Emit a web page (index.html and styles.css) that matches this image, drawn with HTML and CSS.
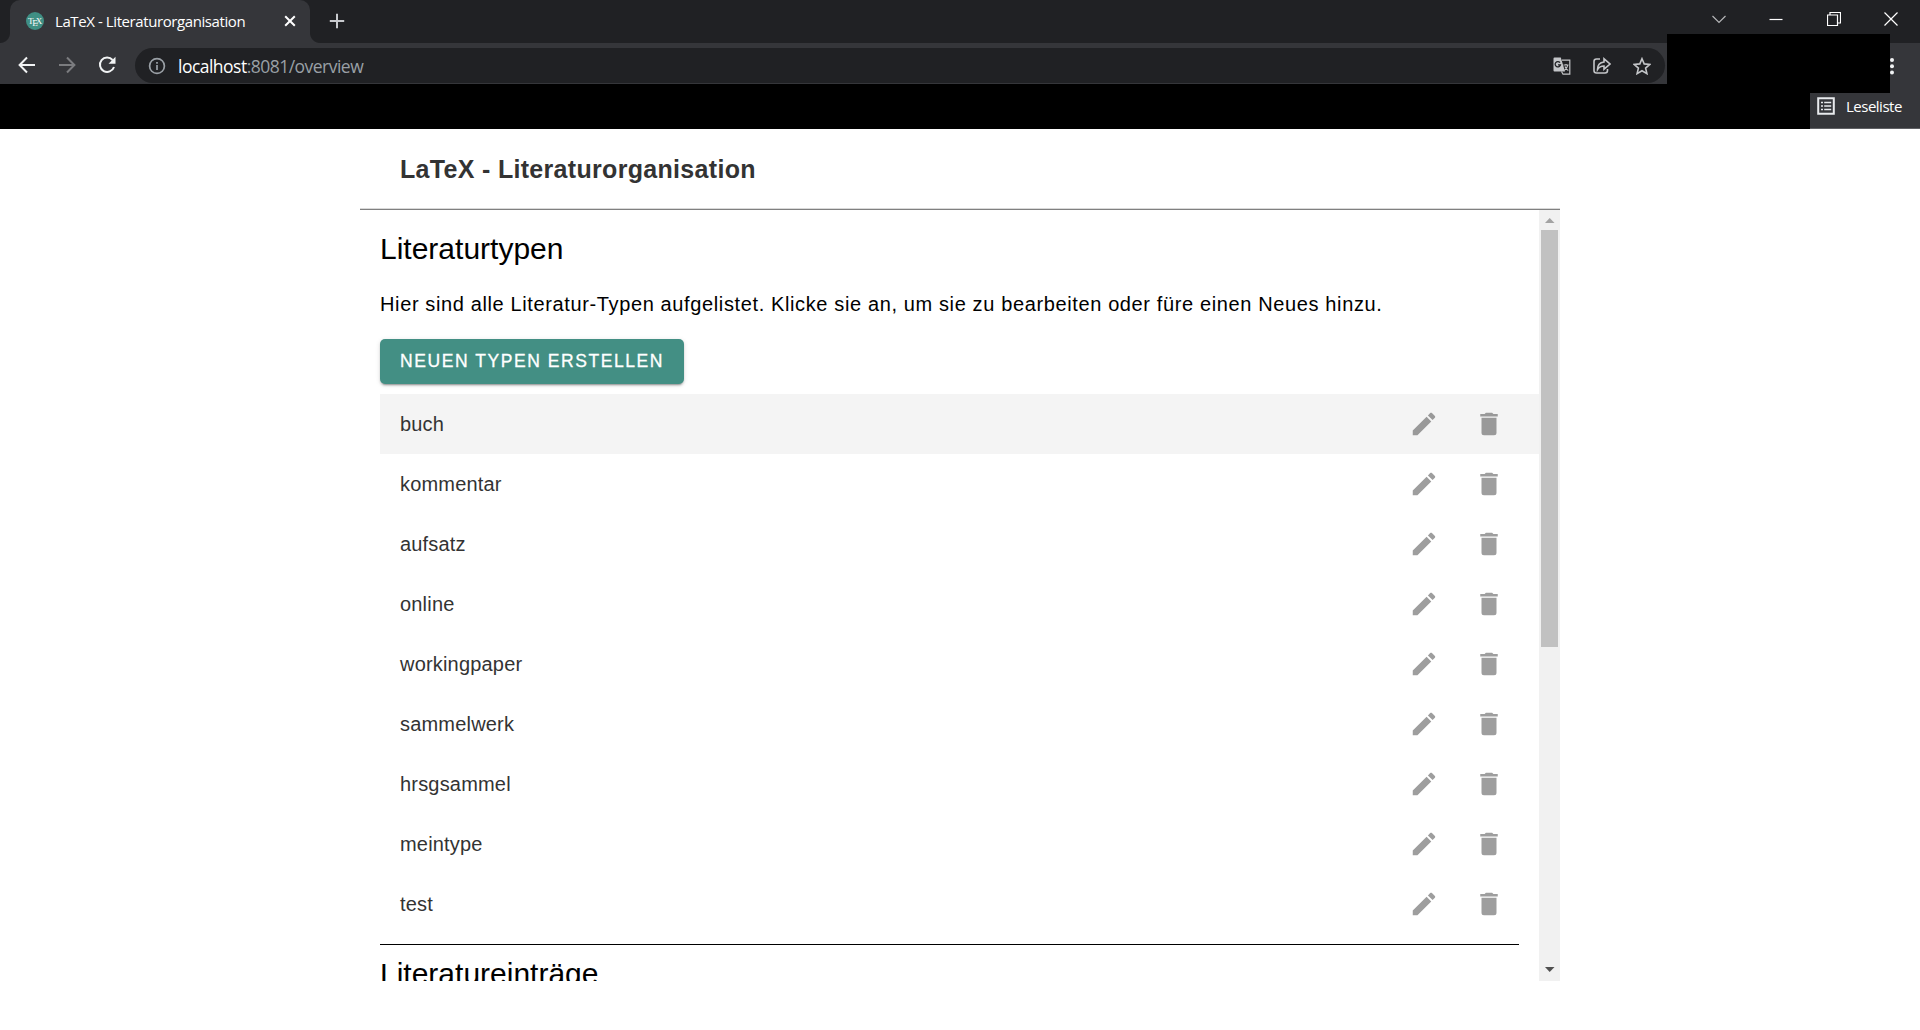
FILE: index.html
```html
<!DOCTYPE html>
<html lang="de">
<head>
<meta charset="utf-8">
<title>LaTeX - Literaturorganisation</title>
<link rel="stylesheet" href="styles.css">
</head>
<body>
<svg class="defs" width="0" height="0">
  <symbol id="pencil" viewBox="0 0 24 24"><path d="M20.71 7.04c.39-.39.39-1.04 0-1.41l-2.34-2.34c-.37-.39-1.02-.39-1.41 0l-1.84 1.83 3.75 3.75M3 17.25V21h3.75L17.81 9.93l-3.75-3.75L3 17.25z"/></symbol>
  <symbol id="trash" viewBox="0 0 24 24"><path d="M19 4h-3.5l-1-1h-5l-1 1H5v2h14M6 19a2 2 0 0 0 2 2h8a2 2 0 0 0 2-2V7H6v12z"/></symbol>
</svg>
<header class="browser">
  <div class="tabstrip">
    <div class="tab">
      <svg class="favicon" viewBox="0 0 18 18"><circle cx="9" cy="9" r="9" fill="#3f8f84"/><text x="2" y="11.600" class="logo-t">T</text><text x="6.200" y="14" class="logo-t">E</text><text x="9.800" y="11.600" class="logo-t">X</text></svg>
      <span class="tab-title">LaTeX - Literaturorganisation</span>
      <svg class="tab-close" viewBox="0 0 12 12"><path d="M1.2 1.2l9.6 9.6M10.8 1.2L1.2 10.8" stroke="#fff" stroke-width="2"/></svg>
    </div>
    <svg class="new-tab" viewBox="0 0 16 16"><path d="M8 .8v14.4M.8 8h14.4" stroke="#c8cace" stroke-width="2"/></svg>
    <div class="window-buttons">
      <svg viewBox="0 0 14 14"><path d="M.5 4L7 10.500 13.500 4"/></svg>
      <svg viewBox="0 0 14 14"><path d="M.5 7.500h13" class="bright"/></svg>
      <svg viewBox="0 0 14 14"><path d="M.5 3h10v10.500H.5zM3 3V.5h10.500v10.500h-3" class="bright"/></svg>
      <svg viewBox="0 0 14 14"><path d="M.5.5l13 13M13.500.5l-13 13" class="bright"/></svg>
    </div>
  </div>
  <div class="toolbar">
    <svg class="nav" viewBox="0 0 18 18"><path d="M17 9H2M9 1.500L1.600 9 9 16.500" /></svg>
    <svg class="nav dim" viewBox="0 0 18 18"><path d="M1 9h15M9 1.500L16.400 9 9 16.500"/></svg>
    <svg class="nav" viewBox="0 0 18 18"><path d="M14.600 4A7.200 7.200 0 1 0 16 11"/><path d="M17.500.8v7h-7z" class="solid"/></svg>
    <div class="omnibox">
      <svg class="info" viewBox="0 0 18 18"><circle cx="9" cy="9" r="7.400"/><path d="M9 8v5M9 5v1.800"/></svg>
      <span class="url">localhost<span class="path">:8081/overview</span></span>
      <div class="omni-actions">
        <svg viewBox="0 0 18 18"><path d="M9 3.200h7.800v14H10L8.500 14.500" class="line thin"/><path d="M1.500.5h6.300L12 14.500H1.500a1 1 0 0 1-1-1v-12a1 1 0 0 1 1-1z"/><path d="M7 5.600A2.700 2.700 0 1 0 7.500 7.800H5" class="cut"/><path d="M10.500 8h5M13 7v1M14.800 8c-.5 2.500-2 4.500-3.500 5.500M12 9.500c.7 1.700 2 3.400 3.300 4" class="line thin"/></svg>
        <svg viewBox="0 0 18 18"><path d="M7 2H3.500Q1 2 1 4.500v9Q1 16 3.500 16h8.500q2.500 0 2.500-2.500V12" class="line"/><path d="M4.500 12.500C4.500 8 7 5.500 11 5V1.800L17 7l-6 5.200V9C8 9 6 10 4.500 12.500z" class="line"/></svg>
        <svg viewBox="0 0 18 18"><path d="M9 1.700l2.200 5.200 5.700.5-4.300 3.700 1.300 5.500L9 13.700l-4.900 2.900 1.300-5.500L1.100 7.400l5.700-.5z" class="line star"/></svg>
      </div>
    </div>
    <svg class="menu" viewBox="0 0 6 18"><circle cx="3" cy="3" r="2"/><circle cx="3" cy="9.300" r="2"/><circle cx="3" cy="15.600" r="2"/></svg>
    <div class="extension-cover"></div>
  </div>
  <div class="bookmarks">
    <div class="reading-list">
      <svg viewBox="0 0 18 18"><path d="M1.200 1.200h15.600v15.600H1.200z" fill="none" stroke="#e8eaed" stroke-width="2"/><path d="M4 5.500h2M7.200 5.500h7M4 9h2M7.200 9h7M4 12.500h2M7.200 12.500h7" stroke="#e8eaed" stroke-width="1.700"/></svg>
      <span>Leseliste</span>
    </div>
  </div>
</header>
<main class="app">
  <h1 class="app-title">LaTeX - Literaturorganisation</h1>
  <div class="scroller">
    <section class="content">
      <h2>Literaturtypen</h2>
      <p>Hier sind alle Literatur-Typen aufgelistet. Klicke sie an, um sie zu bearbeiten oder füre einen Neues hinzu.</p>
      <button class="create">Neuen Typen erstellen</button>
      <ul class="types">
        <li class="active"><span>buch</span><svg><use href="#pencil"/></svg><svg><use href="#trash"/></svg></li>
        <li><span>kommentar</span><svg><use href="#pencil"/></svg><svg><use href="#trash"/></svg></li>
        <li><span>aufsatz</span><svg><use href="#pencil"/></svg><svg><use href="#trash"/></svg></li>
        <li><span>online</span><svg><use href="#pencil"/></svg><svg><use href="#trash"/></svg></li>
        <li><span>workingpaper</span><svg><use href="#pencil"/></svg><svg><use href="#trash"/></svg></li>
        <li><span>sammelwerk</span><svg><use href="#pencil"/></svg><svg><use href="#trash"/></svg></li>
        <li><span>hrsgsammel</span><svg><use href="#pencil"/></svg><svg><use href="#trash"/></svg></li>
        <li><span>meintype</span><svg><use href="#pencil"/></svg><svg><use href="#trash"/></svg></li>
        <li><span>test</span><svg><use href="#pencil"/></svg><svg><use href="#trash"/></svg></li>
      </ul>
      <hr>
      <h2 class="entries">Literatureinträge</h2>
    </section>
    <div class="scrollbar">
      <svg class="arrow" viewBox="0 0 21 20"><path d="M6 13h9.500L10.700 8z" fill="#a3a3a3"/></svg>
      <div class="thumb"></div>
      <svg class="arrow" viewBox="0 0 21 20"><path d="M6 6h9.500L10.700 11z" fill="#505050"/></svg>
    </div>
  </div>
</main>
</body>
</html>
```
FILE: styles.css
```css
* { box-sizing: border-box; }
body {
  margin: 0;
  height: 1030px;
  overflow: hidden;
  background: #fff;
  font-family: "Liberation Sans", Arial, sans-serif;
}
svg { display: block; flex: none; }
.defs { position: absolute; }

/* Browser frame */
.browser { height: 129px; background: #000; color: #fff; font-family: "Open Sans", "Noto Sans", sans-serif; }
.tabstrip { height: 43px; display: flex; align-items: center; background: #202124; }
.tab {
  position: relative;
  width: 300px; height: 43px; margin-left: 10px; padding: 0 14px 2px 16px;
  display: flex; align-items: center;
  background: #35363a; border-radius: 10px 10px 0 0;
}
.tab::before, .tab::after { content: ""; position: absolute; bottom: 0; width: 10px; height: 10px; }
.tab::before { left: -10px; background: radial-gradient(circle at 0 0, #202124 9.5px, #35363a 10.5px); }
.tab::after { right: -10px; background: radial-gradient(circle at 100% 0, #202124 9.5px, #35363a 10.5px); }
.favicon { width: 18px; height: 18px; }
.logo-t { font: 9px "Liberation Serif", serif; fill: #fff; }
.tab-title { margin-left: 11px; font-size: 15px; letter-spacing: -.41px; white-space: nowrap; }
.tab-close { width: 12px; height: 12px; margin-left: auto; }
.new-tab { width: 16px; height: 16px; margin: 0 0 1px 19px; }
.window-buttons { display: flex; gap: 43.500px; margin: -6px 22px 0 auto; }
.window-buttons svg { width: 14px; height: 14px; fill: none; stroke: #b5b6b8; stroke-width: 1.200; }
.bright { stroke: #fff; }
.toolbar { position: relative; height: 41px; display: flex; align-items: center; background: #35363a; padding: 4px 0 0 18px; }
.nav { width: 18px; height: 18px; margin: -1px 22px 0 0; fill: none; stroke: #f1f3f4; stroke-width: 2; }
.dim { stroke: #7b7c7f; }
.nav .solid { fill: #f1f3f4; stroke: none; }
.omnibox {
  width: 1530px; height: 35px; margin-left: -3px; padding: 0 14px 0 13px;
  display: flex; align-items: center;
  border-radius: 18px; background: #202124;
}
.info { width: 18px; height: 18px; fill: none; stroke: #9aa0a6; stroke-width: 1.700; }
.url { margin-left: 12px; font-size: 17.500px; letter-spacing: -.52px; }
.path { color: #9aa0a6; }
.omni-actions { display: flex; gap: 22px; margin-left: auto; }
.omni-actions svg { width: 18px; height: 18px; fill: #c3c5c8; }
.omni-actions .line { fill: none; stroke: #c3c5c8; stroke-width: 1.600; }
.omni-actions .thin { stroke-width: 1.200; }
.omni-actions .cut { fill: none; stroke: #202124; stroke-width: 1.300; }
.menu { width: 6px; height: 18px; margin-left: 224px; fill: #f1f3f4; }
.extension-cover { position: absolute; left: 1667px; top: -9px; width: 223px; height: 59px; background: #000; z-index: 1; }
.bookmarks { height: 45px; display: flex; justify-content: flex-end; }
.reading-list {
  width: 110px; height: 45px; padding: 0 0 1px 7px;
  display: flex; align-items: center; gap: 11px;
  background: #35363a; border-bottom: 1px solid #5f6064;
  font-size: 15px; letter-spacing: -.5px;
}
.reading-list svg { width: 18px; height: 18px; }

/* Application */
.app { width: 1200px; margin: 0 auto; }
.app-title {
  height: 81px; margin: 0; padding: 0 40px; line-height: 80px;
  font-size: 25px; letter-spacing: .3125px; color: #333;
  border-bottom: 1px solid #808080;
  box-shadow: inset 0 -1px #d9d9d9;
}
.scroller { height: 771px; display: flex; overflow: hidden; }
.content { flex: 1; height: 771px; padding: 20px 0 0 20px; overflow: hidden; }
h2 { margin: 0; font-size: 30px; line-height: 38px; font-weight: 400; }
p { margin: 21px 0 0; font-size: 20px; line-height: 30px; letter-spacing: .625px; white-space: nowrap; }
.create {
  display: block; width: 304px; height: 45px; margin: 20px 0 10px; padding: 0;
  border: 0; border-radius: 5px; background: #438f84; color: #fff;
  font: 17.500px "Liberation Sans", Arial, sans-serif; -webkit-text-stroke: .3px #fff;
  letter-spacing: 1.5625px; text-transform: uppercase; white-space: nowrap;
  box-shadow: 0 3px 1px -2px rgba(0,0,0,.2), 0 2px 2px rgba(0,0,0,.14), 0 1px 5px rgba(0,0,0,.12);
}
.types { margin: 0; padding: 0; list-style: none; }
.types li { height: 60px; padding: 0 35px 0 20px; display: flex; align-items: center; font-size: 20px; letter-spacing: .1875px; color: #333; }
.types .active { background: #f4f4f4; }
.types .active svg { fill: #999; }
.types span { flex: 1; }
.types svg { width: 30px; height: 30px; fill: #9e9e9e; }
.types svg + svg { margin-left: 35px; }
hr { height: 1px; margin: 10px 20px 0 0; border: 0; background: #000; }
.entries { margin-top: 10px; }
.scrollbar { width: 21px; display: flex; flex-direction: column; background: #f1f1f1; }
.arrow { width: 21px; height: 20px; }
.thumb { width: 17px; height: 417px; margin: 0 2px auto; background: #c1c1c1; }
```
